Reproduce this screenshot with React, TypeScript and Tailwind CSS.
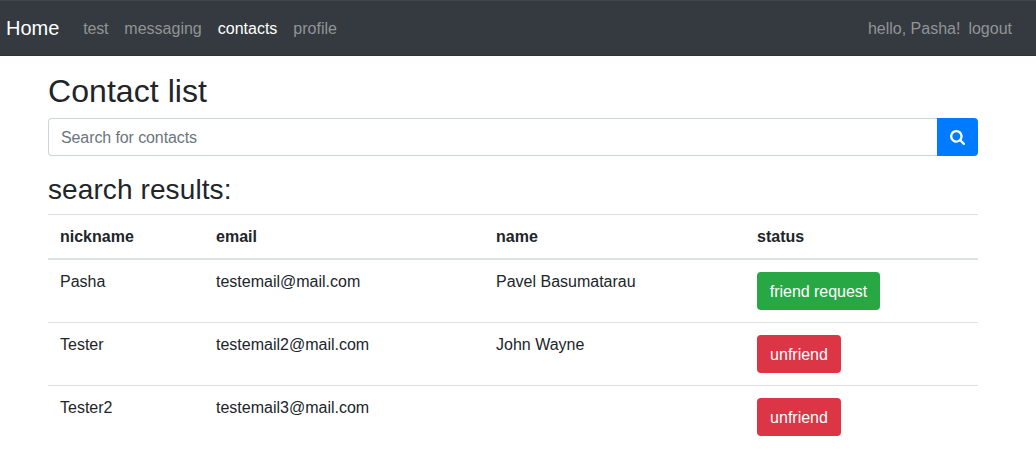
import React from "react";

type Contact = { nickname: string; email: string; name: string; friend: boolean };

const contacts: Contact[] = [
  { nickname: "Pasha", email: "testemail@mail.com", name: "Pavel Basumatarau", friend: false },
  { nickname: "Tester", email: "testemail2@mail.com", name: "John Wayne", friend: true },
  { nickname: "Tester2", email: "testemail3@mail.com", name: "", friend: true },
];

function SearchIcon() {
  return (
    <svg viewBox="64 128 1664 1664" className="h-[15px] w-[15px]" fill="currentColor" aria-hidden="true">
      <path d="M1216 832q0-185-131.500-316.500t-316.500-131.500-316.500 131.500-131.500 316.500 131.500 316.500 316.500 131.500 316.500-131.500 131.500-316.500zm512 832q0 52-38 90t-90 38q-54 0-90-38l-343-342q-179 124-399 124-143 0-273.500-55.500t-225-150-150-225-55.500-273.500 55.500-273.500 150-225 225-150 273.500-55.500 273.500 55.500 225 150 150 225 55.500 273.500q0 220-124 399l343 343q37 37 37 90z" />
    </svg>
  );
}

function Navbar() {
  return (
    <nav className="flex h-14 items-center border-t border-b border-t-[#40464b] border-b-[#2d3338] bg-[#343a40] pl-1.5 pr-4 text-[#929496]">
      <a className="mr-4 text-[20px] leading-[30px] text-white">Home</a>
      <div className="flex flex-1 pt-[2px]">
        <a className="px-2 py-2 tracking-[-0.2px]">test</a>
        <a className="px-2 py-2">messaging</a>
        <a className="px-2 py-2 text-white">contacts</a>
        <a className="px-2 py-2">profile</a>
      </div>
      <span className="pt-[2px] pr-px">hello, Pasha!</span>
      <a className="pr-2 pl-[7px] pt-[2px]">logout</a>
    </nav>
  );
}

function SearchBar() {
  return (
    <div className="flex h-[38px]">
      <input
        className="min-w-0 flex-1 rounded-l border border-r-0 border-[#ced4da] bg-white px-3 pt-[7px] pb-[5px] tracking-[-0.1px] placeholder:text-[#6c757d]"
        placeholder="Search for contacts"
      />
      <button className="flex w-[41px] items-center justify-center rounded-r bg-[#007bff] pt-px text-white" aria-label="Search">
        <SearchIcon />
      </button>
    </div>
  );
}

function ContactTable() {
  return (
    <table className="w-full table-fixed border-collapse text-left">
      <colgroup>
        <col className="w-[156px]" />
        <col className="w-[280px]" />
        <col className="w-[261px]" />
        <col />
      </colgroup>
      <thead>
        <tr>
          {["nickname", "email", "name", "status"].map((title) => (
            <th key={title} className="border-t border-b-2 border-[#dee2e6] px-3 pt-[10px] pb-[9px] font-bold">
              {title}
            </th>
          ))}
        </tr>
      </thead>
      <tbody>
        {contacts.map((c) => (
          <tr key={c.nickname} className="border-t border-[#dee2e6] align-top">
            <td className="px-3 pt-[10px]">{c.nickname}</td>
            <td className="px-3 pt-[10px]">{c.email}</td>
            <td className="px-3 pt-[10px]">{c.name}</td>
            <td className="p-3">
              <button
                className={
                  c.friend
                    ? "block h-[38px] w-[84px] rounded bg-[#dc3545] pt-px text-white"
                    : "block h-[38px] w-[123px] rounded bg-[#28a745] pt-px tracking-[-0.04px] text-white"
                }
              >
                {c.friend ? "unfriend" : "friend request"}
              </button>
            </td>
          </tr>
        ))}
      </tbody>
    </table>
  );
}

export default function App() {
  return (
    <div className="h-[470px] overflow-hidden bg-white font-['Liberation_Sans',Arial,sans-serif] text-[16px] leading-6 text-[#212529]">
      <Navbar />
      <main className="ml-12 w-[930px] pt-4">
        <h2 className="mb-2 text-[32px] leading-[38px] font-medium tracking-[0.06px]">Contact list</h2>
        <SearchBar />
        <h3 className="mt-[17px] mb-[7px] text-[28px] leading-[34px] font-medium tracking-[0.1px]">search results:</h3>
        <ContactTable />
      </main>
    </div>
  );
}
